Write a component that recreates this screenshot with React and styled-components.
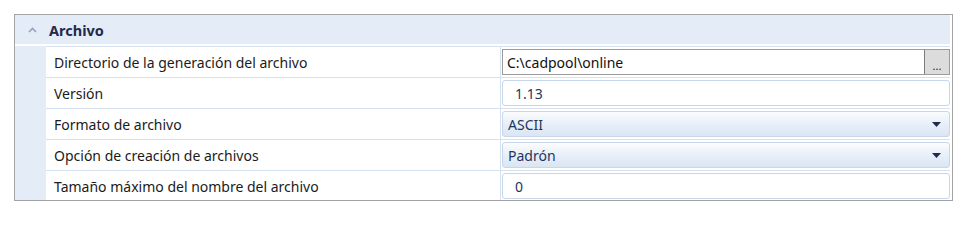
import React from 'react';
import styled, { createGlobalStyle } from 'styled-components';

const GlobalStyle = createGlobalStyle`
    body {
        margin: 0;
        background: #ffffff;
        font-family: "Noto Sans", "Open Sans", sans-serif;
        font-size: 14px;
        color: #1b1b1b;
    }
`;

const Page = styled.div`
    padding: 14px 0 0 14px;
`;

const Panel = styled.div`
    width: 935px;
    height: 185px;
    border: 1px solid #a3a3a3;
    padding-right: 2px;
    box-sizing: content-box;
    overflow: hidden;
    background: #ffffff;
`;

const Header = styled.div`
    display: flex;
    align-items: center;
    height: 29px;
    background: #e4ecf8;
    border-bottom: 2px solid #ffffff;
`;

const Chevron = styled.span`
    display: flex;
    width: 34px;
    justify-content: center;
    padding-top: 1px;
`;

const Title = styled.span`
    font-weight: 700;
    color: #1e2b4a;
    font-size: 14.5px;
`;

const Body = styled.div`
    display: grid;
    grid-template-columns: 31px 1fr;
`;

const Gutter = styled.div`
    background: #e4ecf8;
`;

const Rows = styled.div`
    display: flex;
    flex-direction: column;
`;

const Row = styled.div`
    display: grid;
    grid-template-columns: 455px 1fr;
    height: 31px;
    box-sizing: border-box;
    border-top: 1px solid #d6e1f0;
`;

const Name = styled.div`
    display: flex;
    align-items: center;
    padding-left: 8px;
    border-right: 1px solid #d6e1f0;
`;

const Cell = styled.div`
    display: flex;
    align-items: stretch;
    padding: 2px 0 2px 1px;
`;

const TextBox = styled.div`
    flex: 1;
    display: flex;
    align-items: center;
    padding-left: 12px;
    border: 1px solid #c7d6ea;
    border-radius: 3px;
    color: #1e3560;
    background: #ffffff;
`;

const PathBox = styled.div`
    flex: 1;
    display: flex;
    align-items: stretch;
    border: 1px solid #9c9c9c;
    background: #ffffff;
`;

const PathText = styled.div`
    flex: 1;
    display: flex;
    align-items: center;
    padding-left: 4px;
    color: #111111;
`;

const BrowseButton = styled.div`
    width: 24px;
    background: #dcdcdc;
    border-left: 1px solid #7c7c7c;
    display: flex;
    align-items: flex-end;
    justify-content: center;
    font-size: 11px;
    line-height: 1;
    padding-bottom: 3px;
    color: #1a1a1a;
`;

const Select = styled.div`
    flex: 1;
    display: flex;
    align-items: center;
    justify-content: space-between;
    padding: 0 8px 0 5px;
    border: 1px solid #c7d6ea;
    border-radius: 3px;
    color: #1e3560;
    background: linear-gradient(#fbfcfe, #e6eef8 55%, #dbe6f3);
`;

const ChevronUp = () => (
    <svg width="9" height="6" viewBox="0 0 9 6">
        <polyline points="1,5 4.5,1.5 8,5" fill="none" stroke="#8ea4c2" strokeWidth="1.6" />
    </svg>
);

const Caret = () => (
    <svg width="9" height="5" viewBox="0 0 9 5">
        <polygon points="0,0 9,0 4.5,5" fill="#1e2b4a" />
    </svg>
);

const App = () => (
    <Page>
        <GlobalStyle />
        <Panel>
            <Header>
                <Chevron><ChevronUp /></Chevron>
                <Title>Archivo</Title>
            </Header>
            <Body>
                <Gutter />
                <Rows>
                    <Row>
                        <Name>Directorio de la generación del archivo</Name>
                        <Cell>
                            <PathBox>
                                <PathText>C:\cadpool\online</PathText>
                                <BrowseButton>...</BrowseButton>
                            </PathBox>
                        </Cell>
                    </Row>
                    <Row>
                        <Name>Versión</Name>
                        <Cell><TextBox>1.13</TextBox></Cell>
                    </Row>
                    <Row>
                        <Name>Formato de archivo</Name>
                        <Cell>
                            <Select>ASCII<Caret /></Select>
                        </Cell>
                    </Row>
                    <Row>
                        <Name>Opción de creación de archivos</Name>
                        <Cell>
                            <Select>Padrón<Caret /></Select>
                        </Cell>
                    </Row>
                    <Row>
                        <Name>Tamaño máximo del nombre del archivo</Name>
                        <Cell><TextBox>0</TextBox></Cell>
                    </Row>
                </Rows>
            </Body>
        </Panel>
    </Page>
);

export default App;
